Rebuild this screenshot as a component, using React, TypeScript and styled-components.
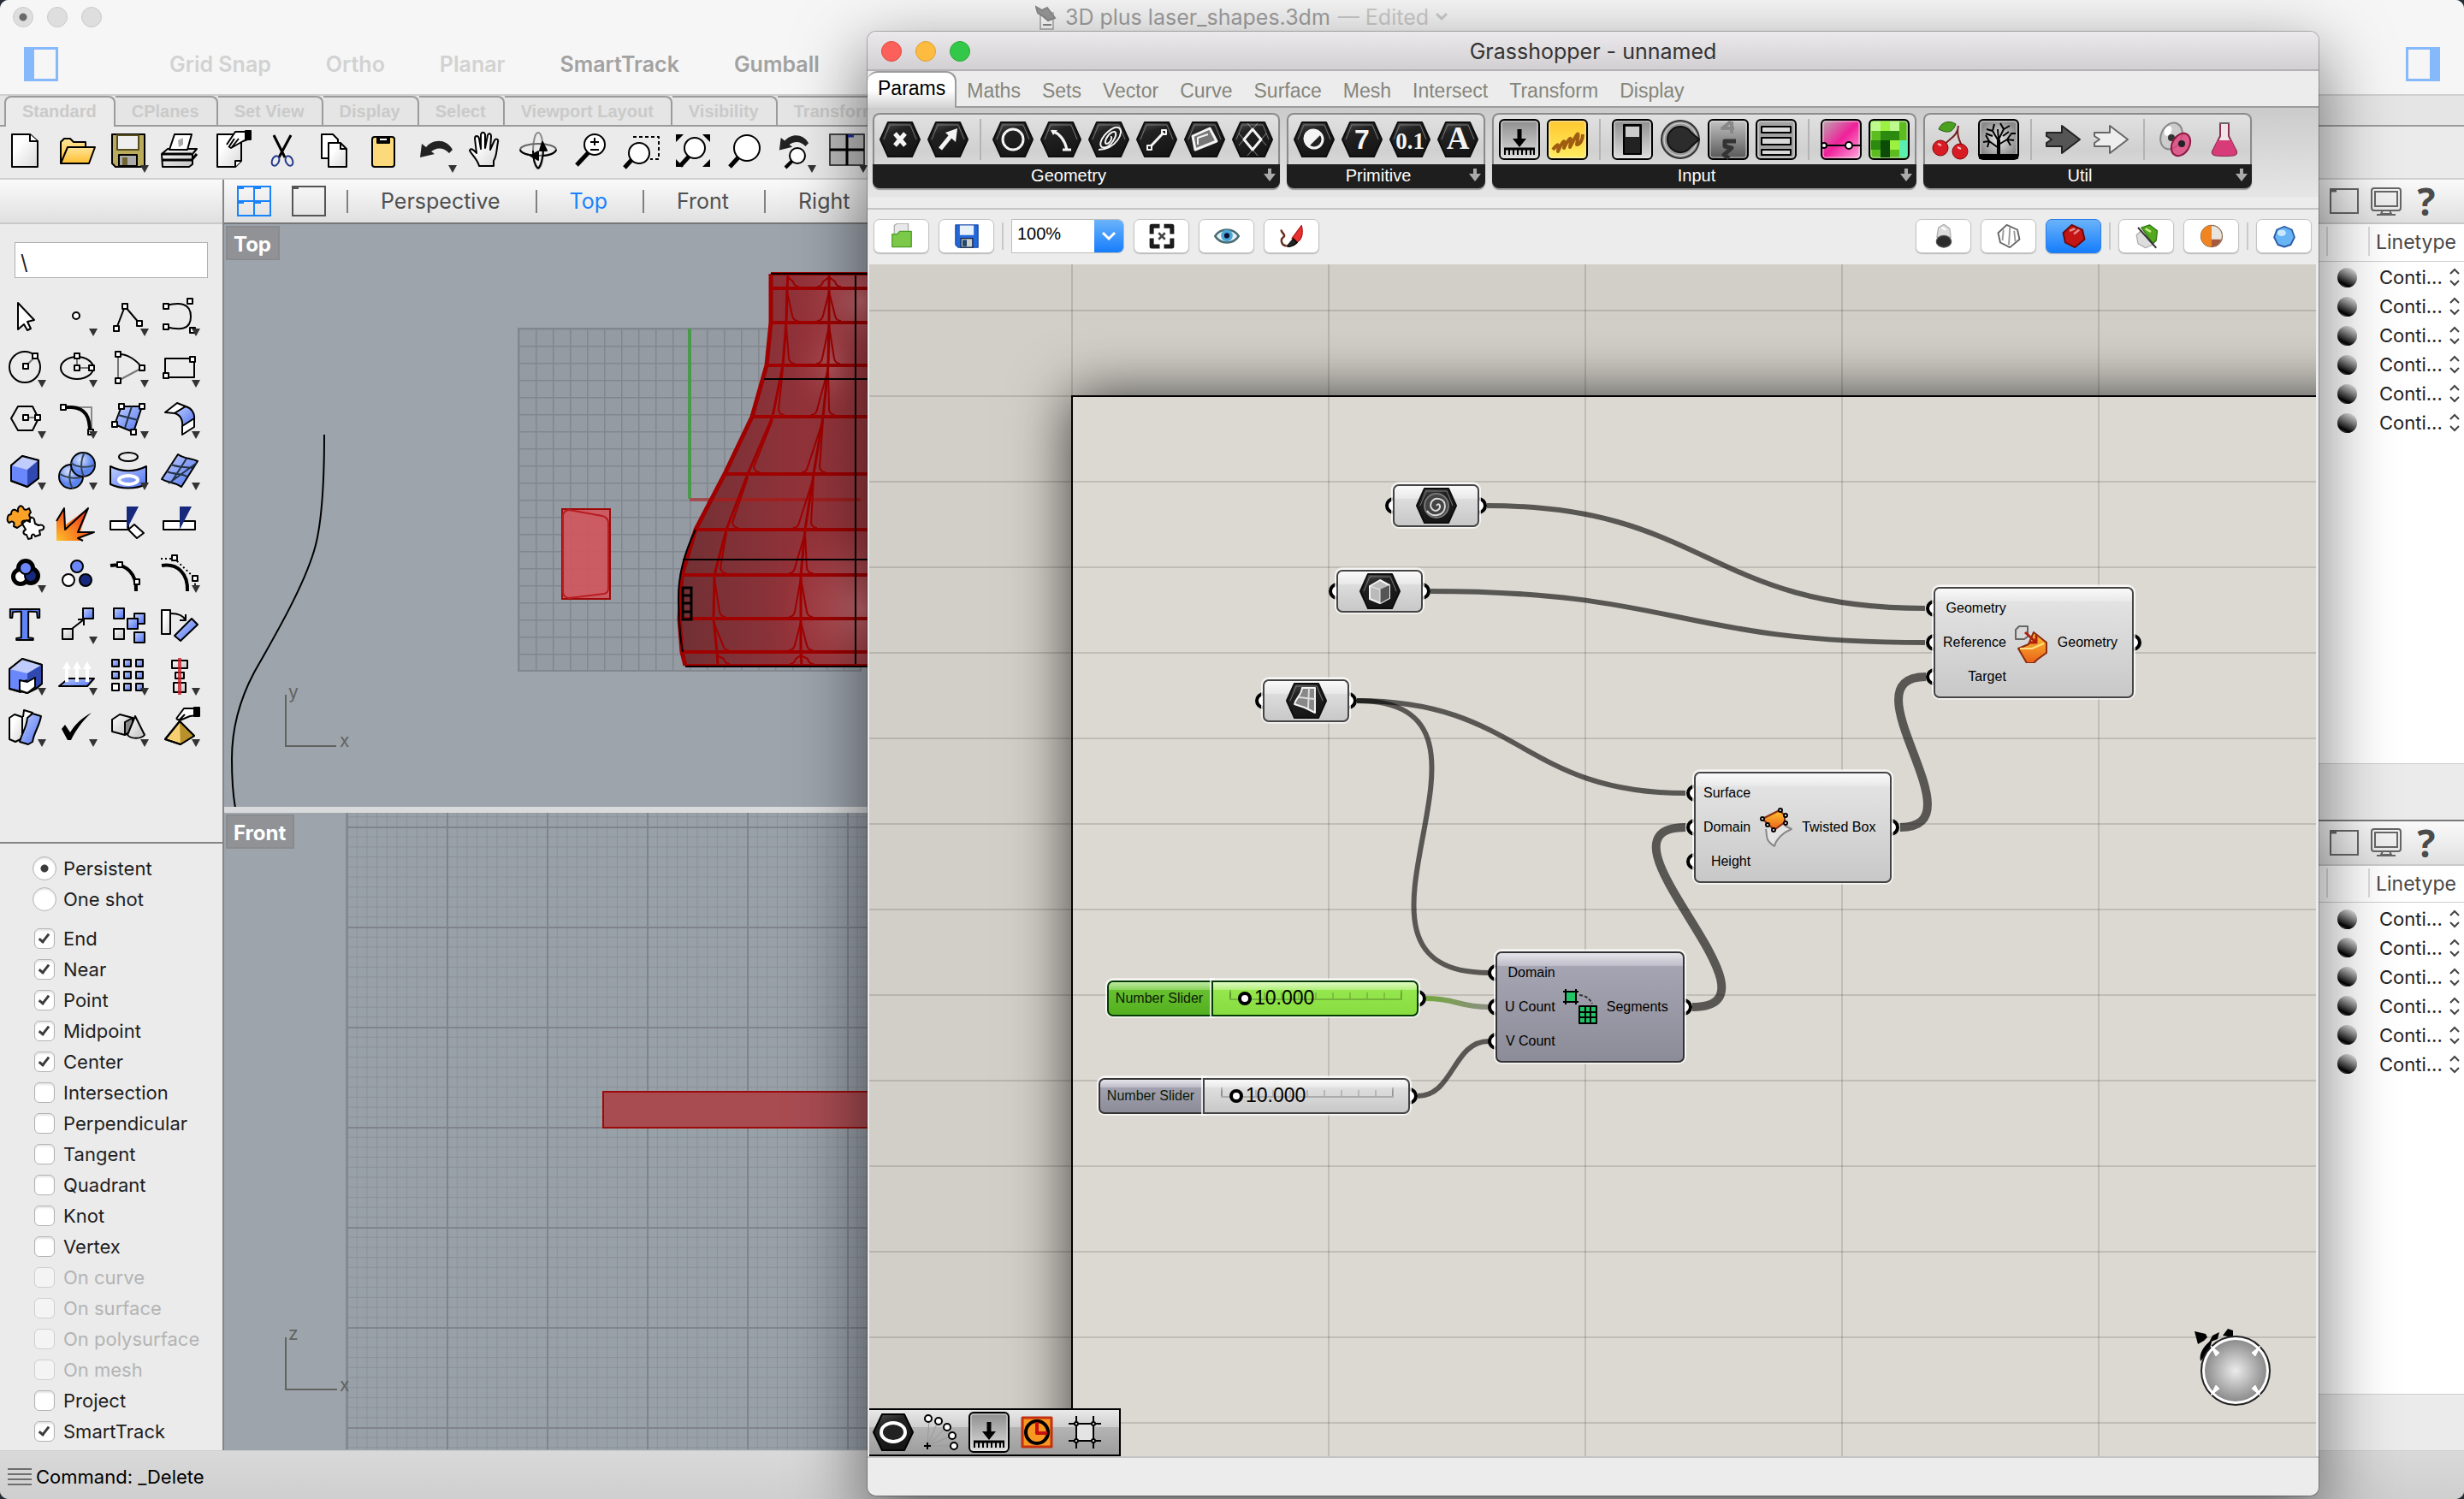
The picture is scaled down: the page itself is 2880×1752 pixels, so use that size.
import React from "react";
import styled, { createGlobalStyle, css } from "styled-components";

/* ---------- theme ---------- */

const ui = `Inter, Roboto, "Liberation Sans", sans-serif`;
const arial = `"Liberation Sans", Arial, sans-serif`;

const GlobalStyle = createGlobalStyle`
  *, *::before, *::after { box-sizing: border-box; }
  html, body, #root { height: 100%; }
  body { margin: 0; background: #262d36; font-family: ${ui}; font-size: 24px; color: #222; overflow: hidden; }
  button, input, select { font: inherit; color: inherit; margin: 0; }
  button { padding: 0; border: 0; background: none; }
  svg { display: block; flex: none; }
`;

/* ---------- modelling window ---------- */

const Desktop = styled.main`
  position: relative;
  height: 100vh;
  overflow: hidden;
`;

const RhinoWindow = styled.section`
  height: 100%;
  display: flex;
  flex-direction: column;
  border-radius: 10px;
  overflow: hidden;
  background: #ebebeb;
`;

const TitleBar = styled.header`
  flex: none;
  height: 40px;
  display: grid;
  grid-template-columns: 1fr auto 1fr;
  align-items: center;
  padding: 0 15px;
  background: #f6f6f6;
`;

const Lights = styled.div<{ $gap: number }>`
  display: flex;
  gap: ${(p) => p.$gap}px;
`;

const Light = styled.button<{ $fill: string; $line: string; $dot?: boolean }>`
  width: 24px;
  height: 24px;
  border-radius: 50%;
  border: 1px solid ${(p) => p.$line};
  background: ${(p) => (p.$dot ? `radial-gradient(circle, #6a6a6a 4px, ${p.$fill} 5px)` : p.$fill)};
`;

const DocTitle = styled.h1`
  margin: 0;
  display: flex;
  align-items: center;
  gap: 9px;
  padding-left: 24px;
  font-size: 25px;
  line-height: 32px;
  font-weight: 400;
  color: #a0a0a0;
`;

const Edited = styled.span`
  color: #cbcbcb;
  display: flex;
  align-items: center;
  gap: 6px;
`;

const ModeBar = styled.nav`
  flex: none;
  height: 72px;
  display: flex;
  align-items: center;
  padding: 0 28px;
  background: #f6f6f6;
  border-bottom: 2px solid #cfcfcf;
`;

const Modes = styled.div`
  display: flex;
  gap: 64px;
  flex: 1;
  padding-left: 130px;
`;

const Mode = styled.button<{ $on?: boolean }>`
  font-size: 25px;
  line-height: 32px;
  font-weight: 600;
  color: ${(p) => (p.$on ? "#a2a2a2" : "#d2d2d2")};
`;

const PaneToggle = styled.button<{ $side: "left" | "right" }>`
  width: 40px;
  height: 40px;
  border: 3px solid #86b9fb;
  border-${(p) => p.$side}-width: 12px;
`;

const TabStrip = styled.nav`
  flex: none;
  height: 36px;
  display: flex;
  padding-left: 5px;
  background: #e5e5e5;
  border-bottom: 2px solid #9b9b9b;
`;

const StripTab = styled.button<{ $on?: boolean }>`
  height: 36px;
  padding: 0 20px 3px 19px;
  border: solid #9b9b9b;
  border-width: 2px 2px 0 0;
  border-top-right-radius: 8px;
  font: 700 20px/24px ${arial};
  color: #cacaca;
  white-space: nowrap;
  background: ${(p) => (p.$on ? "#ebebeb" : "transparent")};
  ${(p) => p.$on && css`
    border-left-width: 2px;
    border-top-left-radius: 8px;
  `}
`;

const IconBar = styled.div`
  flex: none;
  height: 62px;
  display: flex;
  background: #ebebeb;
  border-bottom: 2px solid #d0d0d0;
`;

const Cell = styled.button`
  width: 60px;
  height: 60px;
`;

const Body = styled.div`
  flex: 1;
  min-height: 0;
  display: flex;
`;

const Sidebar = styled.aside`
  flex: none;
  width: 262px;
  display: flex;
  flex-direction: column;
  border-right: 2px solid #858585;
`;

const BarHead = styled.div<{ $dark?: boolean }>`
  flex: none;
  height: 52px;
  display: flex;
  align-items: center;
  background: linear-gradient(#fafafa, #e0e0e0);
  border-bottom: 2px solid ${(p) => (p.$dark ? "#777" : "#c9c9c9")};
`;

const CommandBox = styled.input`
  margin: 21px 17px 14px;
  height: 42px;
  padding: 4px 6px 0;
  border: 1px solid #b0b0b0;
  background: #fff;
  font-size: 24px;
`;

const Palette = styled.div`
  display: grid;
  grid-template-columns: repeat(4, 60px);
`;

const Snaps = styled.fieldset`
  margin: auto 0 0;
  border: 0;
  border-top: 2px solid #858585;
  padding: 11px 0 4px 38px;
  min-width: 0;
`;

const SnapRow = styled.label<{ $off?: boolean; $last?: boolean }>`
  display: flex;
  align-items: center;
  gap: 8px;
  height: 36px;
  margin-bottom: ${(p) => (p.$last ? 10 : 0)}px;
  font-size: 22px;
  line-height: 28px;
  color: ${(p) => (p.$off ? "#b4b4b4" : "#1e1e1e")};
`;

const Radio = styled.input`
  appearance: none;
  width: 28px;
  height: 28px;
  border: 1px solid #b3b3b3;
  border-radius: 50%;
  background: #fff;
  box-shadow: inset 0 2px 2px #e6e6e6;
  &:checked { background: radial-gradient(circle, #3c3c3c 4px, #fff 5px); }
`;

const Check = styled.input`
  appearance: none;
  position: relative;
  width: 24px;
  height: 24px;
  margin: 0 2px;
  border: 1px solid #b3b3b3;
  border-radius: 6px;
  background: #fff;
  box-shadow: inset 0 2px 2px #e6e6e6;
  &:disabled { background: #f4f4f4; border-color: #cfcfcf; box-shadow: none; }
  &:checked::after {
    content: "";
    position: absolute;
    left: 7px;
    top: 3px;
    width: 7px;
    height: 13px;
    border: solid #3c3c3c;
    border-width: 0 3px 3px 0;
    transform: rotate(38deg);
  }
`;

const Views = styled.div`
  flex: 1;
  min-width: 0;
  display: flex;
  flex-direction: column;
`;

const ViewIcons = styled.div`
  display: flex;
  gap: 24px;
  padding: 0 24px 0 15px;
`;

const ViewTab = styled.button<{ $on?: boolean }>`
  padding: 0 41px 0 38px;
  border-left: 2px solid #808080;
  font-size: 25px;
  line-height: 27px;
  color: ${(p) => (p.$on ? "#1a82fb" : "#505050")};
`;

const Viewport = styled.div<{ $grow: number }>`
  position: relative;
  flex: ${(p) => p.$grow} 1 0;
  min-height: 0;
  overflow: hidden;
  background: #9da4ac;
  & + & { border-top: 7px solid #d9dadb; }
`;

const ViewName = styled.div`
  position: absolute;
  left: 2px;
  top: 2px;
  height: 40px;
  padding: 2px 8px 0 7px;
  border: 2px solid #8a8b8e;
  background: #909296;
  color: #fff;
  font-size: 24px;
  line-height: 36px;
  font-weight: 700;
`;

const Scene = styled.svg`
  position: absolute;
  left: 0;
  top: 0;
`;

const StatusBar = styled.footer`
  flex: none;
  height: 57px;
  display: flex;
  align-items: center;
  gap: 5px;
  padding: 4px 9px 0;
  border-top: 1px solid #cdcdcd;
  background: linear-gradient(#d9d9d9, #cfcfcf);
  font-size: 22px;
  color: #000;
`;

/* ---------- layer panel ---------- */

const Layers = styled.aside`
  flex: none;
  width: 220px;
  display: flex;
  flex-direction: column;
`;

const LayerBlock = styled.section<{ $grow: number }>`
  flex: ${(p) => p.$grow} 1 0;
  min-height: 0;
  display: flex;
  flex-direction: column;
  & + & { border-top: 2px solid #7a7a7a; }
`;

const LayerTools = styled(BarHead)`
  justify-content: flex-end;
  gap: 14px;
  padding-right: 29px;
`;

const Help = styled.button`
  font: 700 44px/44px "Open Sans", ${arial};
  color: #4b4b4b;
  width: 30px;
`;

const LayerSpace = styled.div`
  flex: 1;
  background: #fff;
  border-bottom: 1px solid #cfcfcf;
`;

const LayerFoot = styled.div`
  flex: none;
  height: 65px;
`;

const LayerTable = styled.table`
  width: 100%;
  border-collapse: collapse;
  table-layout: fixed;
  background: #fff;
  th {
    height: 43px;
    padding: 0 0 0 9px;
    text-align: left;
    font-size: 23px;
    font-weight: 400;
    color: #484848;
    border-bottom: 1px solid #cfcfcf;
    background: linear-gradient(#dcdcdc, #dcdcdc) 0 3px / 2px 34px no-repeat;
  }
  td { height: 34px; padding: 0; }
  tbody tr:first-child td { height: 36px; padding-top: 2px; }
`;

const Ball = styled.div`
  margin: 0 13px;
  width: 23px;
  height: 23px;
  border-radius: 50%;
  background: linear-gradient(205deg, #e6e6e6 10%, #8a8a8a 40%, #333 65%, #000 78%, #aaa 100%);
`;

const Pick = styled.div`
  display: flex;
  align-items: center;
  padding: 0 5px 0 13px;
  select {
    appearance: none;
    border: 0;
    padding: 0;
    flex: 1;
    min-width: 0;
    background: none;
    font-size: 22px;
    line-height: 30px;
  }
`;

/* ---------- node editor window ---------- */

const GhWindow = styled.section`
  position: absolute;
  left: 1014px;
  right: 170px;
  top: 37px;
  bottom: 4px;
  display: flex;
  flex-direction: column;
  border-radius: 10px;
  overflow: hidden;
  background: #ececec;
`;

const GhShadow = styled.div`
  position: absolute;
  left: 1014px;
  right: 170px;
  top: 37px;
  bottom: 4px;
  border-radius: 10px;
  box-shadow: 0 0 0 1px rgba(0, 0, 0, 0.25), 0 30px 80px 6px rgba(0, 0, 0, 0.5);
`;

const GhTitle = styled.header`
  flex: none;
  height: 46px;
  display: grid;
  grid-template-columns: 1fr auto 1fr;
  align-items: center;
  padding: 2px 16px 0;
  border-bottom: 2px solid #b3b1b4;
  background: linear-gradient(#ebe9eb, #d2d0d2);
  h2 { margin: 0; font-size: 25px; line-height: 32px; font-weight: 400; color: #333; }
`;

const GhTabs = styled.nav`
  flex: none;
  height: 43px;
  display: flex;
`;

const TabLine = styled.div`
  flex: 1;
  border-bottom: 2px solid #9c9c9c;
`;

const GhTab = styled.button<{ $on?: boolean }>`
  padding: 5px 13px 0 12px;
  font: 400 23px/28px ${arial};
  color: #85857b;
  border-bottom: 2px solid #9c9c9c;
  ${(p) => p.$on && css`
    padding: 0 11px 5px 12px;
    color: #000;
    border: solid #9c9c9c;
    border-width: 2px 2px 0 0;
    border-radius: 12px 12px 0 0;
    background: linear-gradient(#fff 50%, #d2d2d2);
  `}
`;

const Ribbon = styled.div`
  flex: none;
  height: 119px;
  display: flex;
  align-items: flex-start;
  gap: 8px;
  padding: 6px 6px 0;
  border-bottom: 2px solid #c4c4c4;
  background: linear-gradient(#cbcbcb, #e6e6e6 104px, #ececec 105px);
`;

const Group = styled.section`
  display: flex;
  flex-direction: column;
  border-radius: 8px;
  overflow: hidden;
  background: linear-gradient(#e2e2e2, #d0d0d0 50%, #e8e8e8);
  box-shadow: 0 0 0 2px #8b8b8b inset, 0 2px 1px #999;
`;

const GroupIcons = styled.div`
  height: 60px;
  display: flex;
  align-items: center;
  gap: 8px;
  padding: 2px 8px 0;
`;

const Rule = styled.span<{ $w: number; $h: number }>`
  width: ${(p) => p.$w}px;
  height: ${(p) => p.$h}px;
  background: linear-gradient(90deg, #b4b4b4, #b4b4b4) center / 2px 100% no-repeat;
`;

const GroupName = styled.div`
  display: flex;
  align-items: center;
  height: 28px;
  padding: 0 4px 2px 2px;
  background: #1e1e1e;
  color: #fff;
  font: 400 20px/24px ${arial};
  text-align: center;
  span { flex: 1; }
`;

const Tools = styled.div`
  flex: none;
  height: 64px;
  display: flex;
  align-items: center;
  gap: 11px;
  padding: 0 8px 3px 7px;
`;

const Tool = styled.button<{ $on?: boolean }>`
  width: 65px;
  height: 40px;
  display: flex;
  align-items: center;
  justify-content: center;
  border: 1px solid ${(p) => (p.$on ? "#2a7de8" : "#c4c4c4")};
  border-radius: 7px;
  background: ${(p) => (p.$on ? "linear-gradient(#6ab3fa, #167dfc)" : "#fff")};
  box-shadow: 0 1px 1px #bbb;
`;

const ThinRule = styled.span`
  width: 2px;
  height: 32px;
  margin: 0 -2px;
  background: #c9c9c9;
`;

const Spacer = styled.span`
  flex: 1;
`;

const Zoom = styled.label`
  display: flex;
  width: 132px;
  height: 40px;
  border: 1px solid #bcbcbc;
  border-radius: 0 7px 7px 0;
  overflow: hidden;
  background: #fff;
  select {
    appearance: none;
    flex: 1;
    min-width: 0;
    border: 0;
    padding: 0 0 6px 6px;
    background: none;
    font: 400 20px/24px ${arial};
    color: #000;
  }
  span {
    width: 34px;
    display: flex;
    align-items: center;
    justify-content: center;
    background: linear-gradient(#6ab3fa, #167dfc);
  }
`;

const Canvas = styled.div`
  position: relative;
  flex: 1;
  margin: 0 3px 0 2px;
  overflow: hidden;
  background: #d2cfc8;
`;

const Sheet = styled.div`
  position: absolute;
  left: 236px;
  top: 153px;
  right: -80px;
  bottom: -80px;
  border: 2px solid #000;
  background: #dcd9d2;
  box-shadow: 0 0 64px rgba(0, 0, 0, 0.7);
`;

const GridLines = styled.div`
  position: absolute;
  inset: 0;
  background:
    linear-gradient(90deg, rgba(0, 0, 0, 0.13) 2px, transparent 2px) 236px 0 / 300px 100%,
    linear-gradient(rgba(0, 0, 0, 0.13) 2px, transparent 2px) 0 53px / 100% 100px;
`;

const Origin = styled.div`
  position: absolute;
  left: 236px;
  top: 153px;
`;

const Wires = styled.svg`
  position: absolute;
  left: 0;
  top: 0;
  overflow: visible;
`;

const Node = styled.div<{ $x: number; $y: number }>`
  position: absolute;
  left: ${(p) => p.$x}px;
  top: ${(p) => p.$y}px;
`;

const Grips = styled.div<{ $side: "left" | "right" }>`
  position: absolute;
  ${(p) => p.$side}: -9px;
  top: 5px;
  bottom: 5px;
  display: flex;
  flex-direction: column;
  justify-content: space-around;
  i {
    width: 20px;
    height: 20px;
    border: 4px solid #000;
    border-radius: 50%;
    background: #fff;
  }
`;

const tones = {
  light: { line: "#444", fill: "linear-gradient(#e6e6e6, #c8c8c8)", shine: "#fafafa, #e8e8e8" },
  mauve: { line: "#333", fill: "linear-gradient(#a9a8b6, #8c8b98)", shine: "#e6e5ec, #bdbcc8" },
  green: { line: "#043c04", fill: "linear-gradient(#98ea50, #88dc40)", shine: "#e0fbc4, #b2f07c" },
  deep: { line: "#043c04", fill: "linear-gradient(#6cc433, #54b01f)", shine: "#bfe8a4, #8ad45c" },
};
type Tone = keyof typeof tones;

const Shell = styled.div<{ $tone: Tone; $shine: number }>`
  position: relative;
  display: flex;
  align-items: center;
  border: 2px solid ${(p) => tones[p.$tone].line};
  border-radius: 7px;
  background:
    linear-gradient(${(p) => tones[p.$tone].shine}) 0 0 / 100% ${(p) => p.$shine}px no-repeat,
    ${(p) => tones[p.$tone].fill};
  box-shadow: 0 0 0 2px rgba(255, 255, 255, 0.5), 0 -1px 0 2px rgba(255, 255, 255, 0.5);
`;

const ParamShell = styled(Shell)`
  width: 101px;
  height: 50px;
  justify-content: center;
`;

const CompShell = styled(Shell)`
  height: 130px;
  padding: 0 17px 0 9px;
  gap: 6px;
  font: 400 16px/20px ${arial};
  color: #000;
  white-space: nowrap;
`;

const Inputs = styled.div`
  display: flex;
  flex-direction: column;
  text-align: right;
  span { height: 40px; line-height: 40px; }
`;

const SliderRow = styled.div`
  position: relative;
  display: flex;
  width: 364px;
  height: 42px;
`;

const SliderName = styled(Shell)`
  width: 124px;
  border-radius: 7px 0 0 7px;
  justify-content: center;
  padding-right: 2px;
  font: 400 16px/20px ${arial};
  color: #0c1a08;
`;

const SliderBody = styled(Shell)`
  flex: 1;
  margin-left: -2px;
  border-radius: 0 7px 7px 0;
  padding-left: 11px;
`;

const Track = styled.div`
  position: relative;
  width: 217px;
  height: 38px;
  display: flex;
  align-items: center;
  background:
    linear-gradient(90deg, rgba(0, 0, 0, 0.2) 2px, transparent 2px) 8px 9px / 201px 10px no-repeat,
    linear-gradient(90deg, rgba(0, 0, 0, 0.2) 2px, transparent 2px) 208px 9px / 2px 10px no-repeat,
    repeating-linear-gradient(90deg, rgba(0, 0, 0, 0.16) 0 2px, transparent 2px 20px) 8px 12px / 201px 7px no-repeat,
    linear-gradient(rgba(0, 0, 0, 0.2), rgba(0, 0, 0, 0.2)) 8px 19px / 202px 2px no-repeat;
`;

const Range = styled.input`
  appearance: none;
  width: 100%;
  height: 16px;
  background: none;
  &::-webkit-slider-thumb {
    appearance: none;
    width: 16px;
    height: 16px;
    border: 4px solid #000;
    border-radius: 50%;
    background: #fff;
  }
`;

const Value = styled.output`
  position: absolute;
  left: 37px;
  top: 4px;
  font: 400 23px/28px ${arial};
  color: #000;
`;

const Dock = styled.div`
  position: absolute;
  left: 0;
  bottom: 0;
  display: flex;
  align-items: center;
  gap: 8px;
  height: 56px;
  padding: 0 16px 0 4px;
  border: solid #000;
  border-width: 2px 2px 2px 0;
  background: linear-gradient(#e9e9e9, #cfcfcf 38%, #b4b4b4 39%, #9d9d9d);
`;

const Compass = styled.svg`
  position: absolute;
  right: 47px;
  bottom: 53px;
`;

const GhStatus = styled.footer`
  flex: none;
  height: 46px;
  border-top: 2px solid #c4c4c4;
`;

/* ---------- icon pieces ---------- */

const DefsSvg = styled.svg`
  position: absolute;
`;

const Defs = () => (
  <DefsSvg width="0" height="0" aria-hidden="true">
    <defs>
      <linearGradient id="blue" x1="0" y1="0" x2="1" y2="1"><stop offset="0" stopColor="#c4d2ff" /><stop offset="1" stopColor="#4c70f0" /></linearGradient>
      <linearGradient id="grey" x1="0" y1="0" x2="1" y2="1"><stop offset="0" stopColor="#fff" /><stop offset="1" stopColor="#bdbdbd" /></linearGradient>
      <linearGradient id="page" x1="0" y1="0" x2="1" y2="1"><stop offset="0.3" stopColor="#fff" /><stop offset="1" stopColor="#d8d8d8" /></linearGradient>
      <radialGradient id="ball" cx="0.4" cy="0.3"><stop offset="0" stopColor="#d5e2ff" /><stop offset="1" stopColor="#5c84ee" /></radialGradient>
      <radialGradient id="fire" cx="0" cy="1" r="1.1"><stop offset="0" stopColor="#ffc02a" /><stop offset="1" stopColor="#f0401a" /></radialGradient>
      <linearGradient id="gold" x1="0" y1="0" x2="0" y2="1"><stop offset="0" stopColor="#ffe59a" /><stop offset="1" stopColor="#ffbe2e" /></linearGradient>
      <linearGradient id="hex" x1="0" y1="0" x2="0.4" y2="1"><stop offset="0" stopColor="#555" /><stop offset="0.35" stopColor="#222" /><stop offset="1" stopColor="#161616" /></linearGradient>
      <linearGradient id="steel" x1="0" y1="0" x2="0" y2="1"><stop offset="0" stopColor="#8d8d8d" /><stop offset="0.5" stopColor="#b5b5b5" /><stop offset="1" stopColor="#dedede" /></linearGradient>
      <linearGradient id="digit" x1="0" y1="0" x2="0" y2="1"><stop offset="0" stopColor="#c4c4c4" /><stop offset="1" stopColor="#555" /></linearGradient>
      <radialGradient id="sky"><stop offset="0" stopColor="#e8e8e8" /><stop offset="1" stopColor="#8a8a8a" /></radialGradient>
      <linearGradient id="amber" x1="0" y1="0" x2="0" y2="1"><stop offset="0" stopColor="#ffc62e" /><stop offset="1" stopColor="#ffee62" /></linearGradient>
      <linearGradient id="pink" x1="0" y1="0" x2="1" y2="1"><stop offset="0" stopColor="#b8b0b0" /><stop offset="0.5" stopColor="#f0209a" /><stop offset="1" stopColor="#ffb0e0" /></linearGradient>
      <linearGradient id="orange" x1="0" y1="0" x2="0" y2="1"><stop offset="0" stopColor="#ffc530" /><stop offset="1" stopColor="#e8601a" /></linearGradient>
      <radialGradient id="dial"><stop offset="0" stopColor="#ececec" /><stop offset="1" stopColor="#8c8c8c" /></radialGradient>
      <linearGradient id="blush" x1="0" y1="0" x2="1" y2="0"><stop offset="0" stopColor="#703034" /><stop offset="0.4" stopColor="#93333a" /><stop offset="1" stopColor="#a8484c" /></linearGradient>
      <radialGradient id="shine"><stop offset="0" stopColor="#d0767c" stopOpacity="0.8" /><stop offset="1" stopColor="#a83038" stopOpacity="0" /></radialGradient>
      <linearGradient id="wire" x1="0" y1="0" x2="1" y2="0"><stop offset="0" stopColor="#72a83c" /><stop offset="1" stopColor="#8c8d84" /></linearGradient>
    </defs>
  </DefsSvg>
);

const Pts = ({ at }: { at: number[][] }) => (
  <g fill="#fff" stroke="#000" strokeWidth="2">
    {at.map(([x, y], i) => <rect key={i} x={x - 3} y={y - 3} width="6" height="6" />)}
  </g>
);

const Big = ({ menu, children }: { menu?: boolean; children: React.ReactNode }) => (
  <svg width="60" height="60" viewBox="0 0 60 60" fill="none" stroke="#000" strokeWidth="2" strokeLinejoin="round" aria-hidden="true">
    {children}
    {menu && <path d="M44 45H54L49 54Z" fill="#333" stroke="none" />}
  </svg>
);

const Undo = ({ s = 1 }: { s?: number }) => (
  <path transform={`scale(${s})`} d="M11 36L13 20L18 24C26 14 42 14 49 27L45 31C38 24 31 24 24 29L28 32Z" fill="#222" stroke="none" />
);

type Tooling = [string, boolean, React.ReactNode];

const fileTools: Tooling[] = [
  ["New", false, <><path d="M14 9H35L44 17V47H14Z" fill="url(#page)" /><path d="M35 9V17H44" fill="#fff" /></>],
  ["Open", false, <><path d="M11 43V18L15 14H22L26 18H40V24" fill="url(#gold)" /><path d="M11 43L19 24H51L44 43Z" fill="url(#gold)" /></>],
  ["Save", true, <><path d="M11 9H49V47H15L11 43Z" fill="#b9aa5c" /><rect x="17" y="10" width="25" height="17" fill="#eee" stroke="#554c20" /><rect x="19" y="33" width="21" height="13" fill="#aaa" /><rect x="23" y="36" width="6" height="9" fill="#6e6430" stroke="none" /></>],
  ["Print", false, <><path d="M9 32L16 26H50L45 32V44L41 47H10Z" fill="url(#grey)" /><path d="M18 27L24 9H44L39 27Z" fill="#fff" /><path d="M28 16L34 13V21L29 24Z" fill="#aaa" stroke="none" /><path d="M9 32H44M9 39H44L50 32" strokeWidth="3" /></>],
  ["Properties", false, <><path d="M14 9H42V40L35 47H14Z" fill="url(#page)" /><path d="M35 47V40H42" fill="#fff" /><path d="M25 21L35 6H46L52 5V14L44 17L30 25L27 23M34 14L28 23M39 14L31 24" fill="#fff" /><rect x="47" y="5" width="6" height="10" fill="#000" /></>],
  ["Cut", false, <><path d="M20 10L33 36M40 10L26 36" strokeWidth="3" /><ellipse cx="22" cy="40" rx="4" ry="6" transform="rotate(25 22 40)" stroke="#233a8c" /><ellipse cx="38" cy="40" rx="4" ry="6" transform="rotate(-25 38 40)" stroke="#233a8c" /></>],
  ["Copy", false, <><path d="M16 9H29L35 15V37H16Z" fill="#fff" /><path d="M24 19H38L45 26V47H24Z" fill="url(#page)" /><path d="M38 19V26H45" /></>],
  ["Paste", false, <><rect x="15" y="12" width="26" height="35" rx="3" fill="#fcda7c" /><path d="M21 12H35V19H21Z" fill="#000" /><path d="M24 15H32" stroke="#fff" /></>],
  ["Undo", true, <Undo />],
  ["Pan", false, <path d="M20 46C18 38 12 34 9 28C10 25 13 26 17 31L15 14C15 10 19 10 20 14L22 26L22 9C23 6 26 6 27 9V25L30 10C31 7 34 8 34 11L33 27L38 16C40 13 43 15 42 18C40 28 41 34 37 40V46Z" fill="url(#page)" />],
  ["Rotate", false, <><ellipse cx="29" cy="28" rx="6" ry="21" stroke="#888" /><path d="M29 49C26 46 23 40 23 28" /><ellipse cx="29" cy="27" rx="21" ry="7" stroke="#666" /><path d="M8 27C9 31 18 34 27 34M50 27C49 31 42 34 35 34" /><path d="M34 18L31 28H39ZM20 34L29 29V39Z" fill="#000" /><path d="M35 26C35 36 32 46 29 49" /></>],
  ["Zoom dynamic", false, <><path d="M28 30L14 45" strokeWidth="5" /><circle cx="35" cy="21" r="12" fill="#fff" /><path d="M35 13V22M30 18H40M30 27H40" /></>],
  ["Zoom window", false, <><path d="M20 12H50V38H40" strokeDasharray="4 3" /><path d="M19 38L10 48" strokeWidth="5" /><circle cx="27" cy="31" r="12" fill="#fff" /></>],
  ["Zoom extents", false, <><path d="M10 9H19L10 18ZM50 9H41L50 18ZM10 47H19L10 38ZM50 47H41L50 38Z" fill="#000" stroke="none" /><path d="M26 34L15 46" strokeWidth="5" /><circle cx="32" cy="25" r="12" fill="#fff" /></>],
  ["Zoom selected", false, <><path d="M23 36L13 47" strokeWidth="5" /><circle cx="33" cy="25" r="15" fill="#fff" /></>],
  ["Undo view", true, <><g transform="translate(1 -5)"><Undo s={0.9} /></g><path d="M26 40L18 48" strokeWidth="4" /><circle cx="32" cy="34" r="9" fill="#fff" /></>],
  ["Four views", true, <><rect x="10" y="9" width="40" height="36" fill="#bdbdbd" stroke="#444" /><path d="M30 9V45M10 27H50" strokeWidth="3" /><path d="M31 11H38" stroke="#2030a0" strokeWidth="3" /></>],
  ["Shade", true, <circle cx="30" cy="28" r="16" fill="url(#grey)" />],
];

const box = "M13 25L26 14L45 19V40L32 50L13 43Z";

const palette: Tooling[] = [
  ["Select", false, <path d="M21 15V46L28 40L32 47L36 45L32 37L40 35Z" fill="#fff" />],
  ["Point", true, <circle cx="29" cy="30" r="4" fill="#fff" />],
  ["Polyline", true, <><path d="M16 45L26 19L43 39" /><Pts at={[[26, 19], [16, 45], [43, 39]]} /></>],
  ["Curve", true, <><path d="M14 18C30 14 43 15 43 31C43 47 30 47 14 43" /><Pts at={[[14, 19], [42, 13], [14, 43], [45, 47]]} /></>],
  ["Circle", true, <><circle cx="29" cy="30" r="18" /><path d="M30 29L41 18" stroke="#777" /><Pts at={[[30, 29], [41, 17]]} /></>],
  ["Ellipse", true, <><ellipse cx="30" cy="31" rx="19" ry="13" /><path d="M30 17V31H47" stroke="#777" /><Pts at={[[30, 31], [30, 17], [47, 31]]} /></>],
  ["Arc", true, <><path d="M18 15V46L46 31" stroke="#777" /><path d="M18 15C28 14 40 22 46 31" /><Pts at={[[18, 15], [46, 31], [18, 46]]} /></>],
  ["Rectangle", true, <><rect x="13" y="20" width="34" height="22" /><Pts at={[[45, 21], [14, 40]]} /></>],
  ["Polygon", true, <><path d="M13 30L21 16H38L45 30L38 44H21Z" /><path d="M30 29H44" stroke="#777" /><Pts at={[[30, 29], [44, 29]]} /></>],
  ["Fillet", true, <><path d="M14 17H47V44" stroke="#888" /><path d="M14 17H24C40 18 45 28 45 46" strokeWidth="4" /><Pts at={[[14, 17], [46, 46]]} /></>],
  ["Surface from points", true, <><path d="M22 16H46L36 46L14 37Z" fill="url(#blue)" /><path d="M34 16L26 41M18 26L41 32" stroke="#234" /><Pts at={[[22, 16], [46, 16], [36, 46], [14, 37]]} /></>],
  ["Loft", true, <><path d="M13 23L27 12L37 16L24 24Z" fill="#fff" /><path d="M24 24L37 16C44 18 48 24 47 32L33 41C34 32 31 26 24 24Z" fill="url(#blue)" /><path d="M33 39L47 30V40L33 49Z" fill="#fff" /></>],
  ["Box", true, <><path d={box} fill="#6a88fb" /><path d="M13 25L26 14L45 19L32 30Z" fill="#c0ccfc" stroke="none" /><path d="M32 30L45 19V40L32 50Z" fill="#2f49b0" stroke="none" /><path d={box} /></>],
  ["Boolean", true, <><circle cx="23" cy="38" r="14" fill="url(#ball)" /><path d="M10 35C18 40 30 41 36 38M26 24C20 32 20 44 25 52" stroke="#345" /><circle cx="37" cy="24" r="14" fill="url(#ball)" /><path d="M23 22C30 28 44 28 51 24M39 10C34 18 34 30 38 38" stroke="#345" /></>],
  ["Project", true, <><ellipse cx="30" cy="15" rx="11" ry="5" /><path d="M9 26C22 33 38 33 51 26V47C38 53 22 53 9 47Z" fill="url(#blue)" /><ellipse cx="30" cy="42" rx="11" ry="5" stroke="#fff" strokeWidth="4" /></>],
  ["Patch", true, <><path d="M28 12C36 18 43 16 51 20L32 50C24 44 17 46 9 41Z" fill="url(#blue)" /><path d="M38 17L20 45M45 28C36 26 30 28 20 24M39 38C32 34 24 36 15 32M17 46L50 22" stroke="#234" /></>],
  ["Join", false, <><path d="M10 23L13 22C13 18 15 16 18 17L21 19C20 14 24 10 27 14C28 17 30 18 34 15L36 20C33 22 34 26 37 26L32 31C28 28 24 30 26 34L20 38L16 36C18 31 14 29 11 32C8 31 8 26 10 23Z" fill="#f9a227" /><path d="M26 33L31 29L35 31C34 26 38 24 40 28L41 33L45 35C50 33 53 37 50 40L46 41L47 46L41 48C40 44 36 45 37 50L33 51L31 46C27 46 26 42 30 40Z" fill="#fff" /></>],
  ["Explode", false, <><path d="M6 53V30L15 15L17 34L43 15L34 42L50 43L32 49L37 53Z" fill="url(#fire)" stroke="none" /><path d="M6 30L15 15L16 40L43 15L31 43L50 43L31 50L37 53" /></>],
  ["Trim", false, <><rect x="9" y="30" width="21" height="10" fill="#fff" /><path d="M28 13H42L28 40Z" fill="#16297c" stroke="none" /><path d="M30 40L37 34L48 44L40 50Z" fill="#fff" /></>],
  ["Split", false, <><rect x="11" y="30" width="37" height="10" fill="#fff" /><path d="M30 13H44L30 40Z" fill="#16297c" stroke="none" /></>],
  ["Group", true, <><g strokeWidth="8"><circle cx="30" cy="25" r="7" /><circle cx="24" cy="35" r="7" /><circle cx="36" cy="34" r="7" /></g><circle cx="24" cy="35" r="7" fill="#fff" /><circle cx="36" cy="34" r="7" fill="#16297c" /><circle cx="30" cy="25" r="7" fill="#6a88fb" /></>],
  ["Ungroup", false, <><circle cx="30" cy="23" r="7" fill="#6a88fb" /><circle cx="20" cy="39" r="7" fill="#fff" /><circle cx="40" cy="39" r="7" fill="#16297c" /></>],
  ["Edit points", false, <><path d="M9 22C28 19 40 32 39 52" strokeWidth="4" /><Pts at={[[20, 21], [40, 41]]} /></>],
  ["Control points", true, <><path d="M9 22C28 19 40 32 39 52" strokeWidth="4" /><path d="M8 14H24L48 37V48" strokeDasharray="2 3" /><Pts at={[[24, 13], [48, 37]]} /></>],
  ["Text", false, <text x="29" y="49" textAnchor="middle" fontFamily="Liberation Serif, serif" fontWeight="700" fontSize="54" fill="#5f84f6">T</text>],
  ["Move", true, <><path d="M24 36L38 25M31 25H38V32" /><rect x="13" y="36" width="12" height="12" fill="url(#grey)" /><rect x="37" y="12" width="12" height="12" fill="url(#blue)" /></>],
  ["Copy objects", false, <><rect x="13" y="12" width="12" height="12" fill="url(#blue)" /><rect x="37" y="18" width="12" height="12" fill="url(#blue)" /><rect x="29" y="24" width="12" height="12" fill="url(#blue)" /><rect x="13" y="36" width="12" height="12" fill="url(#grey)" /><rect x="37" y="40" width="12" height="12" fill="url(#blue)" /></>],
  ["Rotate objects", false, <><rect x="9" y="14" width="10" height="28" fill="url(#page)" /><path d="M20 18C28 18 34 20 37 26M30 26H37V19" /><path d="M24 44L44 24L51 31L31 50Z" fill="url(#blue)" /></>],
  ["Solid edit", true, <><path d="M11 23L26 11L49 18V40L42 46V34L24 38V50L11 46Z" fill="#6a88fb" /><path d="M11 23L26 11L49 18L32 28Z" fill="#c0ccfc" stroke="none" /><path d="M32 28L49 18V40L41 46V33L32 38Z" fill="#2f49b0" stroke="none" /><path d="M11 23L26 11L49 18V40L42 46L32 51L11 46Z" /><path d="M23 36L32 38L41 33V44L32 51L23 48Z" fill="#fff" /></>],
  ["Extrude", true, <><path d="M9 43L20 34H50L42 43Z" fill="url(#blue)" /><path d="M18 38V22M30 38V22M42 38V22" stroke="#fff" strokeWidth="4" /><path d="M13 23L18 14L23 23ZM25 23L30 14L35 23ZM37 23L42 14L47 23Z" fill="#fff" stroke="none" /></>],
  ["Array", true, <>{[12, 26, 40].map((y, r) => [11, 25, 39].map((x, c) => <rect key={`${x}${y}`} x={x} y={y} width="8" height="8" fill={r === 2 && c === 0 ? "#fff" : "url(#blue)"} />))}</>],
  ["Align", true, <><rect x="21" y="13" width="18" height="9" fill="url(#grey)" /><rect x="25" y="27" width="10" height="7" fill="url(#grey)" /><rect x="23" y="39" width="14" height="11" fill="url(#grey)" /><path d="M30 10V53" stroke="#c8202c" strokeWidth="4" opacity="0.8" /></>],
  ["Bend", true, <><path d="M11 20L17 16L26 19V44L18 48L11 45Z" fill="url(#page)" /><path d="M27 19L28 11L38 14L34 20" fill="#fff" /><path d="M32 20L38 15L48 18C46 30 40 36 38 48L33 51L23 48C26 36 31 32 32 20Z" fill="url(#blue)" /></>],
  ["Check", true, <path d="M12 33L16 28L22 37C28 27 36 20 47 14C36 24 29 34 23 46H19Z" fill="#000" stroke="none" />],
  ["Primitives", true, <><path d="M11 22L20 16L35 20V34L26 40L11 36Z" fill="url(#grey)" /><path d="M26 40V25L35 20V34Z" fill="#888" /><path d="M38 18L49 40C45 45 33 45 29 40Z" fill="url(#grey)" /></>],
  ["Pick solid", true, <><path d="M26 21L35 9H46L51 8V17L42 18L30 23L26 21M36 16L30 22" fill="#fff" /><rect x="47" y="8" width="6" height="10" fill="#000" /><path d="M13 45L30 24L47 41L31 51Z" fill="#f5cf70" /><path d="M30 24L47 41L31 51Z" fill="#b8902c" stroke="none" /><path d="M13 45L30 24L47 41L31 51Z" /></>],
];

const Svg48 = ({ children, size = 48 }: { children: React.ReactNode; size?: number }) => (
  <svg width={size} height={size} viewBox="0 0 48 48" fill="none" stroke="#000" strokeWidth="2" strokeLinejoin="round" aria-hidden="true">{children}</svg>
);

const Hex = ({ children }: { children: React.ReactNode }) => (
  <Svg48>
    <path d="M1 24L10 4H38L47 24L38 44H10Z" fill="url(#hex)" stroke="#0d0d0d" />
    <path d="M5 24L12 7H36L43 24" stroke="#777" strokeWidth="1" />
    <g stroke="#f4f4f4" strokeWidth="3">{children}</g>
  </Svg48>
);

const Sq = ({ fill = "url(#steel)", children }: { fill?: string; children: React.ReactNode }) => (
  <Svg48>
    <rect x="1" y="1" width="46" height="46" rx="5" fill={fill} />
    <rect x="3" y="3" width="42" height="42" rx="3" stroke="#eee" strokeWidth="1" opacity="0.7" />
    {children}
  </Svg48>
);

const Glyph = ({ children, size = 32, serif }: { children: string; size?: number; serif?: boolean }) => (
  <text x="24" y="35" textAnchor="middle" fontSize={size} fill="#f4f4f4" stroke="none"
    fontFamily={serif ? "Liberation Serif, serif" : "Liberation Sans, sans-serif"} fontWeight="700">{children}</text>
);

const SliderGlyph = () => <Sq><path d="M24 12V24" strokeWidth="5" /><path d="M16 23H32L24 33Z" fill="#000" stroke="none" /><path d="M6 35H42" strokeWidth="3" /><path d="M7 35V42M12 35V42M17 35V42M22 35V42M27 35V42M32 35V42M37 35V42M41 35V42" /></Sq>;

type Entry = [string, React.ReactNode] | null;

const groups: { name: string; items: Entry[] }[] = [
  {
    name: "Geometry",
    items: [
      ["Point", <Hex><path d="M18 17L30 31M30 17L18 31" strokeWidth="5" /></Hex>],
      ["Vector", <Hex><path d="M15 35L28 19" strokeWidth="5" /><path d="M35 11L33 27L21 16Z" fill="#f4f4f4" stroke="none" /></Hex>],
      null,
      ["Circle", <Hex><circle cx="24" cy="24" r="12" /></Hex>],
      ["Arc", <Hex><path d="M14 14C24 18 29 26 31 36M26 36H36" /><path d="M12 13L20 13L15 19Z" fill="#f4f4f4" stroke="none" /></Hex>],
      ["Curve", <Hex><path strokeWidth="2" d="M12 36C32 36 44 14 35 10C25 8 9 28 16 33C25 36 36 18 31 15C25 14 17 27 21 29C26 29 29 20 26 21" /></Hex>],
      ["Line", <Hex><path d="M17 32L32 16" /><rect x="13" y="31" width="5" height="5" strokeWidth="2" /><rect x="30" y="13" width="5" height="5" strokeWidth="2" /></Hex>],
      ["Plane", <Hex><path d="M10 20L30 11L38 26L13 36Z" fill="#777" /><path d="M16 30V22L28 18" strokeWidth="2" /></Hex>],
      ["Rectangle", <Hex><path d="M24 12L34 24L24 36L14 24Z" /><path d="M18 5L40 31M30 5L8 31M8 17L30 43M40 17L18 43" strokeWidth="1" opacity="0.5" /></Hex>],
    ],
  },
  {
    name: "Primitive",
    items: [
      ["Boolean", <Hex><circle cx="24" cy="24" r="10" fill="#222" /><path d="M31 17A10 10 0 1 0 17 31Z" fill="#f4f4f4" /></Hex>],
      ["Integer", <Hex><Glyph size={32}>7</Glyph></Hex>],
      ["Number", <Hex><Glyph size={27} serif>0.1</Glyph></Hex>],
      ["Text", <Hex><Glyph size={37} serif>A</Glyph></Hex>],
    ],
  },
  {
    name: "Input",
    items: [
      ["Number Slider", <SliderGlyph />],
      ["Graph Mapper", <Sq fill="url(#amber)"><path d="M7 36C13 28 14 28 13 38C20 22 22 24 20 34C28 18 29 20 27 33C37 14 38 12 35 30C39 30 42 24 42 18" stroke="#a05c10" strokeWidth="4" /></Sq>],
      null,
      ["Button", <Sq><rect x="14" y="7" width="20" height="34" fill="#222" /><rect x="16" y="9" width="16" height="12" fill="#ccc" stroke="none" /></Sq>],
      ["Knob", <Svg48><circle cx="24" cy="24" r="22" fill="#9a9a9a" stroke="#333" /><circle cx="24" cy="24" r="19" stroke="#ddd" strokeWidth="1" /><path d="M36 15L46 24L36 33A15 15 0 1 1 36 15Z" fill="#2c2c2c" stroke="#111" /></Svg48>],
      ["Digit Scroller", <Sq fill="url(#digit)"><path d="M27 3L17 11H31M28 3V17" stroke="#888" strokeWidth="4" /><path d="M33 26H20V32L28 34L19 42L25 46" stroke="#333" strokeWidth="5" /></Sq>],
      ["Value List", <Sq fill="#a2a2a2"><g fill="#d8d8d8"><rect x="7" y="9" width="34" height="7" /><rect x="7" y="22" width="34" height="8" /><rect x="7" y="36" width="34" height="6" /></g></Sq>],
      null,
      ["Gradient", <Sq fill="url(#pink)"><path d="M2 31H46" /><circle cx="4" cy="31" r="3" fill="#fff" /><circle cx="33" cy="31" r="4" fill="#fff" /></Sq>],
      ["Image Sampler", <Sq fill="#5cbc20"><g stroke="none"><path d="M3 3H14V14H3ZM25 3H36V14H25Z" fill="#c0f890" /><path d="M14 14H25V25H14ZM3 25H14V36H3ZM25 14H36V25H25Z" fill="#2c8a10" /><path d="M14 25H25V45H14Z" fill="#0c4c08" /><path d="M25 25H36V36H25ZM14 3H25V14H14Z" fill="#9cf040" /><path d="M36 25H45V45H36Z" fill="#5cf0b0" /></g></Sq>],
    ],
  },
  {
    name: "Util",
    items: [
      ["Cherry Picker", <Svg48><path d="M33 8C32 20 24 22 14 32M33 8C30 20 36 28 38 34" stroke="#7a2020" /><path d="M10 12C14 2 24 2 30 6C26 18 18 16 10 12Z" fill="#4ca020" stroke="#205c10" strokeWidth="1" /><circle cx="12" cy="34" r="9" fill="#d81c24" stroke="#800" strokeWidth="1" /><circle cx="35" cy="38" r="9" fill="#d81c24" stroke="#800" strokeWidth="1" /><path d="M9 29L13 31M32 33L36 35" stroke="#fbb" /></Svg48>],
      ["Galapagos", <Sq fill="url(#sky)"><path d="M2 42H46V46H2Z" fill="#000" /><path d="M24 42V24" strokeWidth="4" /><path d="M24 34L13 26L6 27M24 30L34 24L42 25M24 26L17 14L10 12M24 24L30 12L37 8M13 26L9 19M17 14L19 6M34 24L39 17L44 17M30 12L26 5M17 20L9 17M29 20L36 15M24 24L23 12M13 26L11 33M34 24L38 31" strokeWidth="2" /></Sq>],
      null,
      ["Cluster Input", <Svg48><path d="M4 16H22V8L43 24L22 40V32H4V28L10 24L4 20Z" fill="#555" stroke="#222" /></Svg48>],
      ["Cluster Output", <Svg48><path d="M4 16H22V8L43 24L22 40V32H4V28L10 24L4 20Z" fill="#eee" stroke="#666" /></Svg48>],
      null,
      ["Data Dam", <Svg48><ellipse cx="18" cy="20" rx="12" ry="16" fill="#ccc" stroke="#888" transform="rotate(25 18 20)" /><ellipse cx="14" cy="14" rx="4" ry="6" fill="#fff" stroke="none" transform="rotate(25 14 14)" /><circle cx="18" cy="22" r="4" fill="#333" stroke="none" /><ellipse cx="29" cy="30" rx="10" ry="14" fill="#e0407c" fillOpacity="0.8" stroke="#8c1840" transform="rotate(30 29 30)" /><circle cx="30" cy="29" r="4" fill="#222" stroke="none" /></Svg48>],
      ["Fitness", <Svg48><path d="M19 5H29V20L38 38C39 42 36 43 24 43C12 43 9 42 10 38L19 20Z" fill="#f0e4e8" stroke="#8c3050" /><path d="M16 25H32L38 39C38 42 35 43 24 43C13 43 10 42 10 39Z" fill="#d83c78" stroke="none" /><path d="M18 5H30" stroke="#666" /></Svg48>],
    ],
  },
];

const GemIcon = ({ fill, line }: { fill: string; line: string }) => (
  <Svg48 size={30}><path d="M20 3L40 12L44 30L26 45L8 36L4 18Z" fill={fill} stroke={line} strokeWidth="3" /><path d="M16 14L26 10M24 20L34 12" stroke="#fff" strokeWidth="4" opacity="0.5" /></Svg48>
);

const leftTools: [string, React.ReactNode][] = [
  ["Zoom extents", <Svg48 size={30}><path d="M5 20V5H20M28 5H43V20M43 28V43H28M20 43H5V28" strokeWidth="8" stroke="#1c1c1c" /><path d="M18 18L30 30M30 18L18 30" stroke="#444" strokeWidth="4" /></Svg48>],
  ["Preview", <Svg48 size={30}><path d="M2 24C12 8 36 8 46 24C36 40 12 40 2 24Z" fill="#e8f2f4" stroke="#4a6c74" strokeWidth="4" /><circle cx="24" cy="23" r="11" fill="#48a8d8" stroke="none" /><circle cx="24" cy="23" r="5" fill="#113" stroke="none" /></Svg48>],
  ["Sketch", <Svg48 size={30}><path d="M24 28L42 4C46 20 42 32 32 36Z" fill="#e83030" stroke="#b01818" /><path d="M26 28L34 36C28 42 18 46 14 42" fill="#222" /><path d="M14 42C4 42 2 30 8 26C14 22 4 18 4 12" strokeWidth="4" stroke="#6a3020" /></Svg48>],
];

/* ---------- scenes ---------- */

const vaseY = [58, 75, 115, 165, 225, 292, 357, 410, 461, 500, 516];
const vaseL = [639, 639, 639, 634, 617, 585, 551, 535, 532, 535, 539];
const vaseA = [659, 658, 657, 653, 641, 612, 587, 573, 572, 576, 577];
const vaseB = [707, 707, 707, 706, 700, 689, 679, 674, 674, 674, 675];

const lineOf = (xs: number[]) => xs.map((x, i) => `${i ? "L" : "M"}${x} ${vaseY[i]}`).join("");
const webOf = (xs: number[], dx: number) =>
  xs.slice(0, -1).map((x, i) => {
    const y0 = vaseY[i], y1 = vaseY[i + 1], nx = xs[i + 1] + dx;
    return `M${x} ${y0 + 4}L${nx} ${y1 - 8}Q${nx + dx / 5} ${y1 - 2} ${nx + dx} ${y1 - 2}`;
  }).join("");

const TopScene = () => (
  <Scene width="1200" height="682" fill="none">
    <defs>
      <pattern id="cells" x="344" y="122" width="20" height="20" patternUnits="userSpaceOnUse"><path d="M0 0V20M0 0H20" stroke="#82868f" strokeWidth="3" /></pattern>
      <clipPath id="vase"><path d={`${lineOf(vaseL)}H900V58Z`} /></clipPath>
    </defs>
    <rect x="344" y="122" width="400" height="400" fill="#949ba3" />
    <rect x="344" y="122" width="400" height="400" fill="url(#cells)" stroke="#82868f" strokeWidth="2" />
    <path d="M544 122V321" stroke="#4a9a4c" strokeWidth="4" />
    <path d="M544 322H744" stroke="#a04c50" strokeWidth="4" />
    <path d="M117 246C117 300 115 350 105 382C92 425 60 480 35 524C18 556 9 590 9 625C9 650 10 665 13 682" stroke="#000" strokeWidth="2" />
    <rect x="395" y="333" width="56" height="105" fill="#d0575d" fillOpacity="0.92" stroke="#9c0a0a" strokeWidth="2" />
    <path d="M403 334L442 341Q449 343 449 349V426Q449 431 444 432L403 437Q396 436 396 430V341Q396 335 403 334" stroke="#b81c20" strokeWidth="2" />
    <g clipPath="url(#vase)">
      <rect x="530" y="58" width="370" height="460" fill="url(#blush)" />
      <ellipse cx="745" cy="90" rx="80" ry="90" fill="url(#shine)" />
      <ellipse cx="710" cy="165" rx="50" ry="70" fill="url(#shine)" opacity="0.6" />
      <ellipse cx="745" cy="450" rx="110" ry="120" fill="url(#shine)" />
    </g>
    <path d="M568 322H744" stroke="#a02020" strokeWidth="4" />
    <g stroke="#a00000">
      {vaseY.map((y, i) => <path key={y} d={`M${vaseL[i]} ${y}H900`} strokeWidth="4" />)}
      <path d={lineOf(vaseL)} strokeWidth="5" />
      <path d={lineOf(vaseA)} strokeWidth="3" />
      <path d={lineOf(vaseB)} strokeWidth="3" />
      <path d={webOf(vaseA, 7) + webOf(vaseB, 7) + webOf(vaseB, -7)} strokeWidth="2" />
    </g>
    <path d="M639 58H900M738 60V514M631 181H900M536 392H900M539 517H900M551 357Q530 400 531 440T536 500" stroke="#000" strokeWidth="2" />
    <path d="M536 425H546V462H536ZM536 434H546M536 443H546M536 453H546" stroke="#000" strokeWidth="3" />
    <path d="M72 550V610H131" stroke="#62635f" strokeWidth="2" />
    <text x="75" y="554" fontFamily={ui} fontSize="21" fill="#62635f">y</text>
    <text x="135" y="611" fontFamily={ui} fontSize="21" fill="#62635f">x</text>
  </Scene>
);

const FrontScene = () => (
  <Scene width="1200" height="745" fill="none">
    <defs>
      <pattern id="minor" x="143" y="16" width="11.7" height="11.7" patternUnits="userSpaceOnUse"><path d="M0 0V12M0 0H12" stroke="#8b919a" strokeWidth="2" /></pattern>
      <pattern id="major" x="143" y="16" width="117" height="117" patternUnits="userSpaceOnUse"><path d="M1 0V117M0 1H117" stroke="#7f848d" strokeWidth="2" /></pattern>
    </defs>
    <rect x="143" y="0" width="1060" height="744" fill="#98a0a8" />
    <rect x="143" y="0" width="1060" height="744" fill="url(#minor)" />
    <rect x="143" y="0" width="1060" height="744" fill="url(#major)" />
    <path d="M143 0V744" stroke="#858a93" strokeWidth="2" />
    <rect x="443" y="326" width="600" height="42" fill="#a84c52" stroke="#9c0a0a" strokeWidth="2" />
    <path d="M72 613V674H132" stroke="#62635f" strokeWidth="2" />
    <text x="75" y="616" fontFamily={ui} fontSize="21" fill="#62635f">z</text>
    <text x="135" y="676" fontFamily={ui} fontSize="21" fill="#62635f">x</text>
  </Scene>
);

/* ---------- composed parts ---------- */

const snaps: [string, boolean, boolean][] = [
  ["End", true, false], ["Near", true, false], ["Point", true, false], ["Midpoint", true, false], ["Center", true, false],
  ["Intersection", false, false], ["Perpendicular", false, false], ["Tangent", false, false], ["Quadrant", false, false],
  ["Knot", false, false], ["Vertex", false, false], ["On curve", false, true], ["On surface", false, true],
  ["On polysurface", false, true], ["On mesh", false, true], ["Project", false, false], ["SmartTrack", true, false],
];

const LayerPanel = ({ grow }: { grow: number }) => (
  <LayerBlock $grow={grow}>
    <LayerTools>
      <svg width="34" height="30" viewBox="0 0 34 30" fill="none" stroke="#666" strokeWidth="2"><rect x="1" y="1" width="32" height="28" /><path d="M2 3H8" strokeWidth="3" /></svg>
      <svg width="36" height="33" viewBox="0 0 36 33" fill="none" stroke="#666" strokeWidth="2"><rect x="1" y="1" width="34" height="26" rx="3" /><rect x="5" y="5" width="26" height="17" /><path d="M14 27L12 31H24L22 27M7 32H29" /></svg>
      <Help aria-label="Help">?</Help>
    </LayerTools>
    <LayerTable>
      <colgroup><col /><col width="49" /><col width="112" /></colgroup>
      <thead><tr><th aria-label="Layer" /><th aria-label="Material" /><th>Linetype</th></tr></thead>
      <tbody>
        {[1, 2, 3, 4, 5, 6].map((n) => (
          <tr key={n}>
            <td />
            <td><Ball /></td>
            <td>
              <Pick>
                <select aria-label={`Linetype ${n}`}><option>Conti...</option></select>
                <svg width="12" height="22" viewBox="0 0 12 22" fill="none" stroke="#444" strokeWidth="2"><path d="M1 7L6 2L11 7M1 15L6 20L11 15" /></svg>
              </Pick>
            </td>
          </tr>
        ))}
      </tbody>
    </LayerTable>
    <LayerSpace />
    <LayerFoot />
  </LayerBlock>
);

const Param = ({ x, y, children }: { x: number; y: number; children: React.ReactNode }) => (
  <Node $x={x} $y={y}>
    <Grips $side="left"><i /></Grips>
    <Grips $side="right"><i /></Grips>
    <ParamShell $tone="light" $shine={15}>{children}</ParamShell>
  </Node>
);

const Component = ({ x, y, tone = "light", inputs, output, children }: {
  x: number; y: number; tone?: Tone; inputs: string[]; output: string; children: React.ReactNode;
}) => (
  <Node $x={x} $y={y}>
    <Grips $side="left">{inputs.map((n) => <i key={n} />)}</Grips>
    <Grips $side="right"><i /></Grips>
    <CompShell $tone={tone} $shine={15}>
      <Inputs>{inputs.map((n) => <span key={n}>{n}</span>)}</Inputs>
      {children}
      <span>{output}</span>
    </CompShell>
  </Node>
);

const NumberSlider = ({ x, y, id, name, body }: { x: number; y: number; id: string; name: Tone; body: Tone }) => (
  <Node $x={x} $y={y}>
    <Grips $side="right"><i /></Grips>
    <SliderRow>
      <SliderName $tone={name} $shine={9}><label htmlFor={id}>Number Slider</label></SliderName>
      <SliderBody $tone={body} $shine={9}>
        <Track>
          <Range id={id} type="range" min="0" max="110" step="0.001" defaultValue="10" />
          <Value htmlFor={id}>10.000</Value>
        </Track>
      </SliderBody>
    </SliderRow>
  </Node>
);

const bez = (x0: number, y0: number, x1: number, y1: number, d: number) =>
  `M${x0} ${y0}C${x0 + d} ${y0} ${x1 - d} ${y1} ${x1} ${y1}`;

export default function App() {
  return (
    <>
      <GlobalStyle />
      <Defs />
      <Desktop>
        <RhinoWindow>
          <TitleBar>
            <Lights $gap={16}>
              <Light aria-label="Close" $fill="#dedede" $line="#cacaca" $dot />
              <Light aria-label="Minimise" $fill="#dedede" $line="#cacaca" />
              <Light aria-label="Zoom" $fill="#dedede" $line="#cacaca" />
            </Lights>
            <DocTitle>
              <svg width="26" height="30" viewBox="0 0 26 30" fill="none" stroke="#8a8a8a" strokeWidth="2"><path d="M6 10H21V29H6Z" fill="#fff" stroke="#bbb" /><path d="M1 3L8 7L14 4L20 12L23 16L15 19L9 14L3 10Z" fill="#999" /><path d="M9 24H19" /></svg>
              <span>3D plus laser_shapes.3dm</span>
              <Edited>— Edited <svg width="18" height="12" viewBox="0 0 18 12" fill="none" stroke="#cbcbcb" strokeWidth="3"><path d="M3 2L9 8L15 2" /></svg></Edited>
            </DocTitle>
          </TitleBar>
          <ModeBar>
            <PaneToggle $side="left" aria-label="Toggle left sidebar" />
            <Modes>
              <Mode>Grid Snap</Mode>
              <Mode>Ortho</Mode>
              <Mode>Planar</Mode>
              <Mode $on>SmartTrack</Mode>
              <Mode $on>Gumball</Mode>
            </Modes>
            <PaneToggle $side="right" aria-label="Toggle right sidebar" />
          </ModeBar>
          <TabStrip>
            {["Standard", "CPlanes", "Set View", "Display", "Select", "Viewport Layout", "Visibility", "Transform"].map((t, i) => (
              <StripTab key={t} $on={i === 0}>{t}</StripTab>
            ))}
          </TabStrip>
          <IconBar>
            {fileTools.map(([n, menu, art]) => <Cell key={n} aria-label={n}><Big menu={menu}>{art}</Big></Cell>)}
          </IconBar>
          <Body>
            <Sidebar>
              <BarHead />
              <CommandBox aria-label="Command" defaultValue="\" />
              <Palette>
                {palette.map(([n, menu, art]) => <Cell key={n} aria-label={n}><Big menu={menu}>{art}</Big></Cell>)}
              </Palette>
              <Snaps>
                <SnapRow><Radio type="radio" name="mode" defaultChecked />Persistent</SnapRow>
                <SnapRow $last><Radio type="radio" name="mode" />One shot</SnapRow>
                {snaps.map(([n, on, off]) => (
                  <SnapRow key={n} $off={off}><Check type="checkbox" defaultChecked={on} disabled={off} />{n}</SnapRow>
                ))}
              </Snaps>
            </Sidebar>
            <Views>
              <BarHead $dark>
                <ViewIcons>
                  <svg width="40" height="36" viewBox="0 0 40 36" fill="none" stroke="#1a82fb" strokeWidth="2"><rect x="1" y="1" width="38" height="34" /><path d="M20 1V35M1 18H39M2 3H8M21 3H28M2 20H8M21 20H28" /></svg>
                  <svg width="40" height="36" viewBox="0 0 40 36" fill="none" stroke="#555" strokeWidth="2"><rect x="1" y="1" width="38" height="34" /><path d="M2 3H8" /></svg>
                </ViewIcons>
                <ViewTab>Perspective</ViewTab>
                <ViewTab $on>Top</ViewTab>
                <ViewTab>Front</ViewTab>
                <ViewTab>Right</ViewTab>
              </BarHead>
              <Viewport $grow={681}><TopScene /><ViewName>Top</ViewName></Viewport>
              <Viewport $grow={745}><FrontScene /><ViewName>Front</ViewName></Viewport>
            </Views>
            <Layers>
              <LayerPanel grow={749} />
              <LayerPanel grow={736} />
            </Layers>
          </Body>
          <StatusBar>
            <svg width="28" height="20" viewBox="0 0 28 20" stroke="#6e6e6e" strokeWidth="2"><path d="M0 1H28M0 7H28M0 13H28M0 19H28" /></svg>
            Command: _Delete
          </StatusBar>
        </RhinoWindow>

        <GhShadow />
        <GhWindow>
          <GhTitle>
            <Lights $gap={16}>
              <Light aria-label="Close" $fill="#fc605b" $line="#e2453f" />
              <Light aria-label="Minimise" $fill="#fdbc40" $line="#dfa033" />
              <Light aria-label="Zoom" $fill="#34c84a" $line="#27aa35" />
            </Lights>
            <h2>Grasshopper - unnamed</h2>
          </GhTitle>
          <GhTabs>
            {["Params", "Maths", "Sets", "Vector", "Curve", "Surface", "Mesh", "Intersect", "Transform", "Display"].map((t, i) => (
              <GhTab key={t} $on={i === 0}>{t}</GhTab>
            ))}
            <TabLine />
          </GhTabs>
          <Ribbon>
            {groups.map((g) => (
              <Group key={g.name}>
                <GroupIcons>
                  {g.items.map((it, i) => (it ? <button key={i} aria-label={it[0]}>{it[1]}</button> : <Rule key={i} $w={12} $h={48} />))}
                </GroupIcons>
                <GroupName>
                  <span>{g.name}</span>
                  <svg width="16" height="16" viewBox="0 0 16 16" fill="#aaa"><path d="M6 0H10V6H15L8 15L1 6H6Z" /></svg>
                </GroupName>
              </Group>
            ))}
          </Ribbon>
          <Tools>
            <Tool aria-label="Open"><Svg48 size={30}><path d="M10 26V4L16 0H36V26Z" fill="#e8e8e8" stroke="#aaa" /><path d="M6 44V20H16L20 15H42V44Z" fill="#7cc848" stroke="#4c9c28" /></Svg48></Tool>
            <Tool aria-label="Save"><Svg48 size={30}><path d="M3 3H45V45H8L3 40Z" fill="#2468d8" stroke="#1848a8" /><rect x="11" y="4" width="26" height="18" fill="#e8f0fc" stroke="none" /><rect x="13" y="28" width="22" height="17" fill="#ccc" stroke="#124" /><rect x="16" y="31" width="8" height="12" fill="#246" stroke="none" /></Svg48></Tool>
            <ThinRule />
            <Zoom>
              <select aria-label="Zoom" defaultValue="100%"><option>100%</option></select>
              <span><svg width="18" height="12" viewBox="0 0 18 12" fill="none" stroke="#fff" strokeWidth="3"><path d="M2 2L9 9L16 2" /></svg></span>
            </Zoom>
            {leftTools.map(([n, art]) => <Tool key={n} aria-label={n}>{art}</Tool>)}
            <Spacer />
            <Tool aria-label="No preview"><Svg48 size={30}><path d="M14 8L24 2L35 10L37 26H11Z" fill="#ddd" stroke="#aaa" /><path d="M20 8L28 12" stroke="#fff" strokeWidth="4" /><ellipse cx="24" cy="34" rx="14" ry="11" fill="#2c2c2c" stroke="#555" /></Svg48></Tool>
            <Tool aria-label="Wire preview"><Svg48 size={30}><path d="M20 3L40 12L44 30L26 45L8 36L4 18Z" fill="#fff" stroke="#666" strokeWidth="3" /><path d="M14 12L12 32M26 8L24 40M34 14L36 34" stroke="#999" strokeWidth="3" /></Svg48></Tool>
            <Tool aria-label="Shaded preview" $on><GemIcon fill="#c41414" line="#6c0808" /></Tool>
            <ThinRule />
            <Tool aria-label="Selected only"><Svg48 size={30}><path d="M5 22L14 14L36 40L22 46L8 38Z" fill="#ddd" stroke="#aaa" /><path d="M14 8L30 3L44 14L42 32L36 38Z" fill="#54a81c" stroke="#2c7010" /><path d="M22 10L32 16" stroke="#c8f090" strokeWidth="4" /><path d="M8 8L42 46" stroke="#333" strokeWidth="3" /></Svg48></Tool>
            <Tool aria-label="Document preview"><Svg48 size={30}><circle cx="24" cy="24" r="20" fill="#e8e4e0" stroke="#8c6a50" /><path d="M24 4A20 20 0 0 0 24 44Z" fill="#f08420" stroke="none" /><path d="M24 30H42A20 20 0 0 1 24 44Z" fill="#a8583c" stroke="none" /></Svg48></Tool>
            <ThinRule />
            <Tool aria-label="Mesh quality"><Svg48 size={30}><path d="M24 6L38 12L43 26L36 40L24 44L12 40L5 26L10 12Z" fill="#68b4f4" stroke="#2c5ca8" strokeWidth="3" /><ellipse cx="19" cy="18" rx="8" ry="6" fill="#c8e8ff" stroke="none" /></Svg48></Tool>
          </Tools>
          <Canvas>
            <Sheet />
            <GridLines />
            <Origin>
              <Wires width="10" height="10" fill="none" stroke="#000" strokeOpacity="0.6">
                <g strokeWidth="6">
                  <path d={bez(486, 129, 998, 249, 256)} />
                  <path d={bez(420, 229, 998, 289, 289)} />
                  <path d={bez(334, 357, 718, 465, 192)} />
                  <path d={bez(334, 357, 488, 675, 214)} />
                  <path d={bez(415, 705, 488, 715, 36)} stroke="url(#wire)" strokeOpacity="1" />
                  <path d={bez(405, 819, 488, 755, 42)} />
                </g>
                <g strokeWidth="10">
                  <path d={bez(969, 505, 999, 329, 97)} />
                  <path d={bez(726, 715, 718, 505, 122)} />
                </g>
              </Wires>
              <Param x={376} y={104}><Hex><circle cx="24" cy="24" r="14" stroke="#777" strokeWidth="2" fill="#444" /><path d="M24 24C26 20 30 24 27 28C22 33 15 27 18 20C22 13 34 15 34 25C33 37 18 38 13 30" strokeWidth="2" stroke="#ddd" /></Hex></Param>
              <Param x={310} y={204}><Hex><path d="M12 18L24 11L35 17V32L24 38L12 33Z" fill="#bbb" strokeWidth="2" /><path d="M24 22L35 17V32L24 38Z" fill="#555" stroke="none" /><path d="M12 18L24 22V38" stroke="#eee" strokeWidth="1" /></Hex></Param>
              <Param x={224} y={332}><Hex><path d="M19 9H34V38L22 32L10 28C12 20 18 18 19 9Z" fill="#888" strokeWidth="2" /><path d="M27 9L26 33M15 20L34 22" strokeWidth="2" stroke="#ddd" /></Hex></Param>
              <Component x={1008} y={224} inputs={["Geometry", "Reference", "Target"]} output="Geometry">
                <Svg48><path d="M5 9L9 5H19V17L15 20H5Z" fill="#d8d8d8" stroke="#666" /><path d="M8 31L20 26L26 12L41 24V36L30 44L26 48H18Z" fill="url(#orange)" stroke="#8c2c10" /><path d="M10 31L24 31L38 25" stroke="#ffe080" /><path d="M16 12L28 23M29 15V24H21" stroke="#b02010" strokeWidth="3" /></Svg48>
              </Component>
              <Component x={728} y={440} inputs={["Surface", "Domain", "Height"]} output="Twisted Box">
                <Svg48><path d="M12 26C14 34 10 38 22 46C24 38 32 30 42 26L34 22" fill="#e4e4e4" stroke="#888" /><path d="M8 14L28 4L34 10V18L22 27L14 20Z" fill="url(#orange)" stroke="#8c2c10" /><g fill="#fff"><circle cx="8" cy="14" r="2" /><circle cx="29" cy="4" r="2" /><circle cx="35" cy="10" r="2" /><circle cx="35" cy="19" r="2" /><circle cx="21" cy="27" r="2" /><circle cx="14" cy="21" r="2" /></g></Svg48>
              </Component>
              <Component x={496} y={650} tone="mauve" inputs={["Domain", "U Count", "V Count"]} output="Segments">
                <Svg48><rect x="6" y="6" width="12" height="12" fill="#22c468" /><path d="M3 6H21M3 18H21M6 3V21M18 3V21" /><path d="M22 10C30 11 34 14 37 20" stroke="#333" strokeDasharray="4 2" /><rect x="22" y="23" width="20" height="20" fill="#22c468" /><path d="M29 23V43M35 23V43M22 30H42M22 36H42" strokeWidth="2" /></Svg48>
              </Component>
              <NumberSlider x={42} y={684} id="u-count" name="deep" body="green" />
              <NumberSlider x={32} y={798} id="v-count" name="mauve" body="light" />
            </Origin>
            <Compass width="96" height="96" viewBox="0 0 96 96">
              <path d="M1 3L14 6L16 10L12 14L5 18ZM18 16L22 8L30 4L28 12ZM34 8L40 0L46 2L46 10ZM8 38C6 28 12 20 22 12L18 26Z" fill="#000" />
              <circle cx="49" cy="49" r="40" fill="#fff" stroke="#222" strokeWidth="2" />
              <circle cx="49" cy="49" r="36" fill="url(#dial)" />
              <path d="M20 20L30 28L26 32ZM78 20L68 28L72 32ZM20 78L26 66L30 70ZM78 78L68 70L72 66Z" fill="#fff" stroke="#fff" strokeWidth="1" />
            </Compass>
            <Dock>
              <button aria-label="Circle"><Svg48><path d="M1 24L11 3H37L47 24L37 45H11Z" fill="url(#hex)" /><ellipse cx="24" cy="24" rx="14" ry="11" fill="#222" stroke="#fff" strokeWidth="4" /></Svg48></button>
              <button aria-label="Polar array"><Svg48><path d="M8 40L10 8M8 40L20 12M8 40L30 18M8 40L36 28M8 40H38" stroke="#999" strokeWidth="1" /><g fill="#fff"><circle cx="9" cy="8" r="4" /><circle cx="21" cy="11" r="4" /><circle cx="31" cy="18" r="4" /><circle cx="37" cy="28" r="4" /><circle cx="39" cy="40" r="4" /></g><path d="M8 36V44M4 40H12" /></Svg48></button>
              <button aria-label="Slider"><SliderGlyph /></button>
              <button aria-label="Timer"><Svg48><rect x="7" y="7" width="34" height="34" fill="#f89820" stroke="#c43010" strokeWidth="3" /><circle cx="24" cy="24" r="13" strokeWidth="4" /><path d="M24 12V25H36" stroke="#c41010" strokeWidth="4" /></Svg48></button>
              <button aria-label="Crop"><Svg48><path d="M14 5V43M34 5V43M5 14H43M5 34H43" /><rect x="15" y="15" width="18" height="18" fill="#e4e4e4" stroke="none" /><g fill="#fff"><circle cx="14" cy="14" r="2" /><circle cx="34" cy="14" r="2" /><circle cx="14" cy="34" r="2" /><circle cx="34" cy="34" r="2" /></g></Svg48></button>
            </Dock>
          </Canvas>
          <GhStatus />
        </GhWindow>
      </Desktop>
    </>
  );
}
